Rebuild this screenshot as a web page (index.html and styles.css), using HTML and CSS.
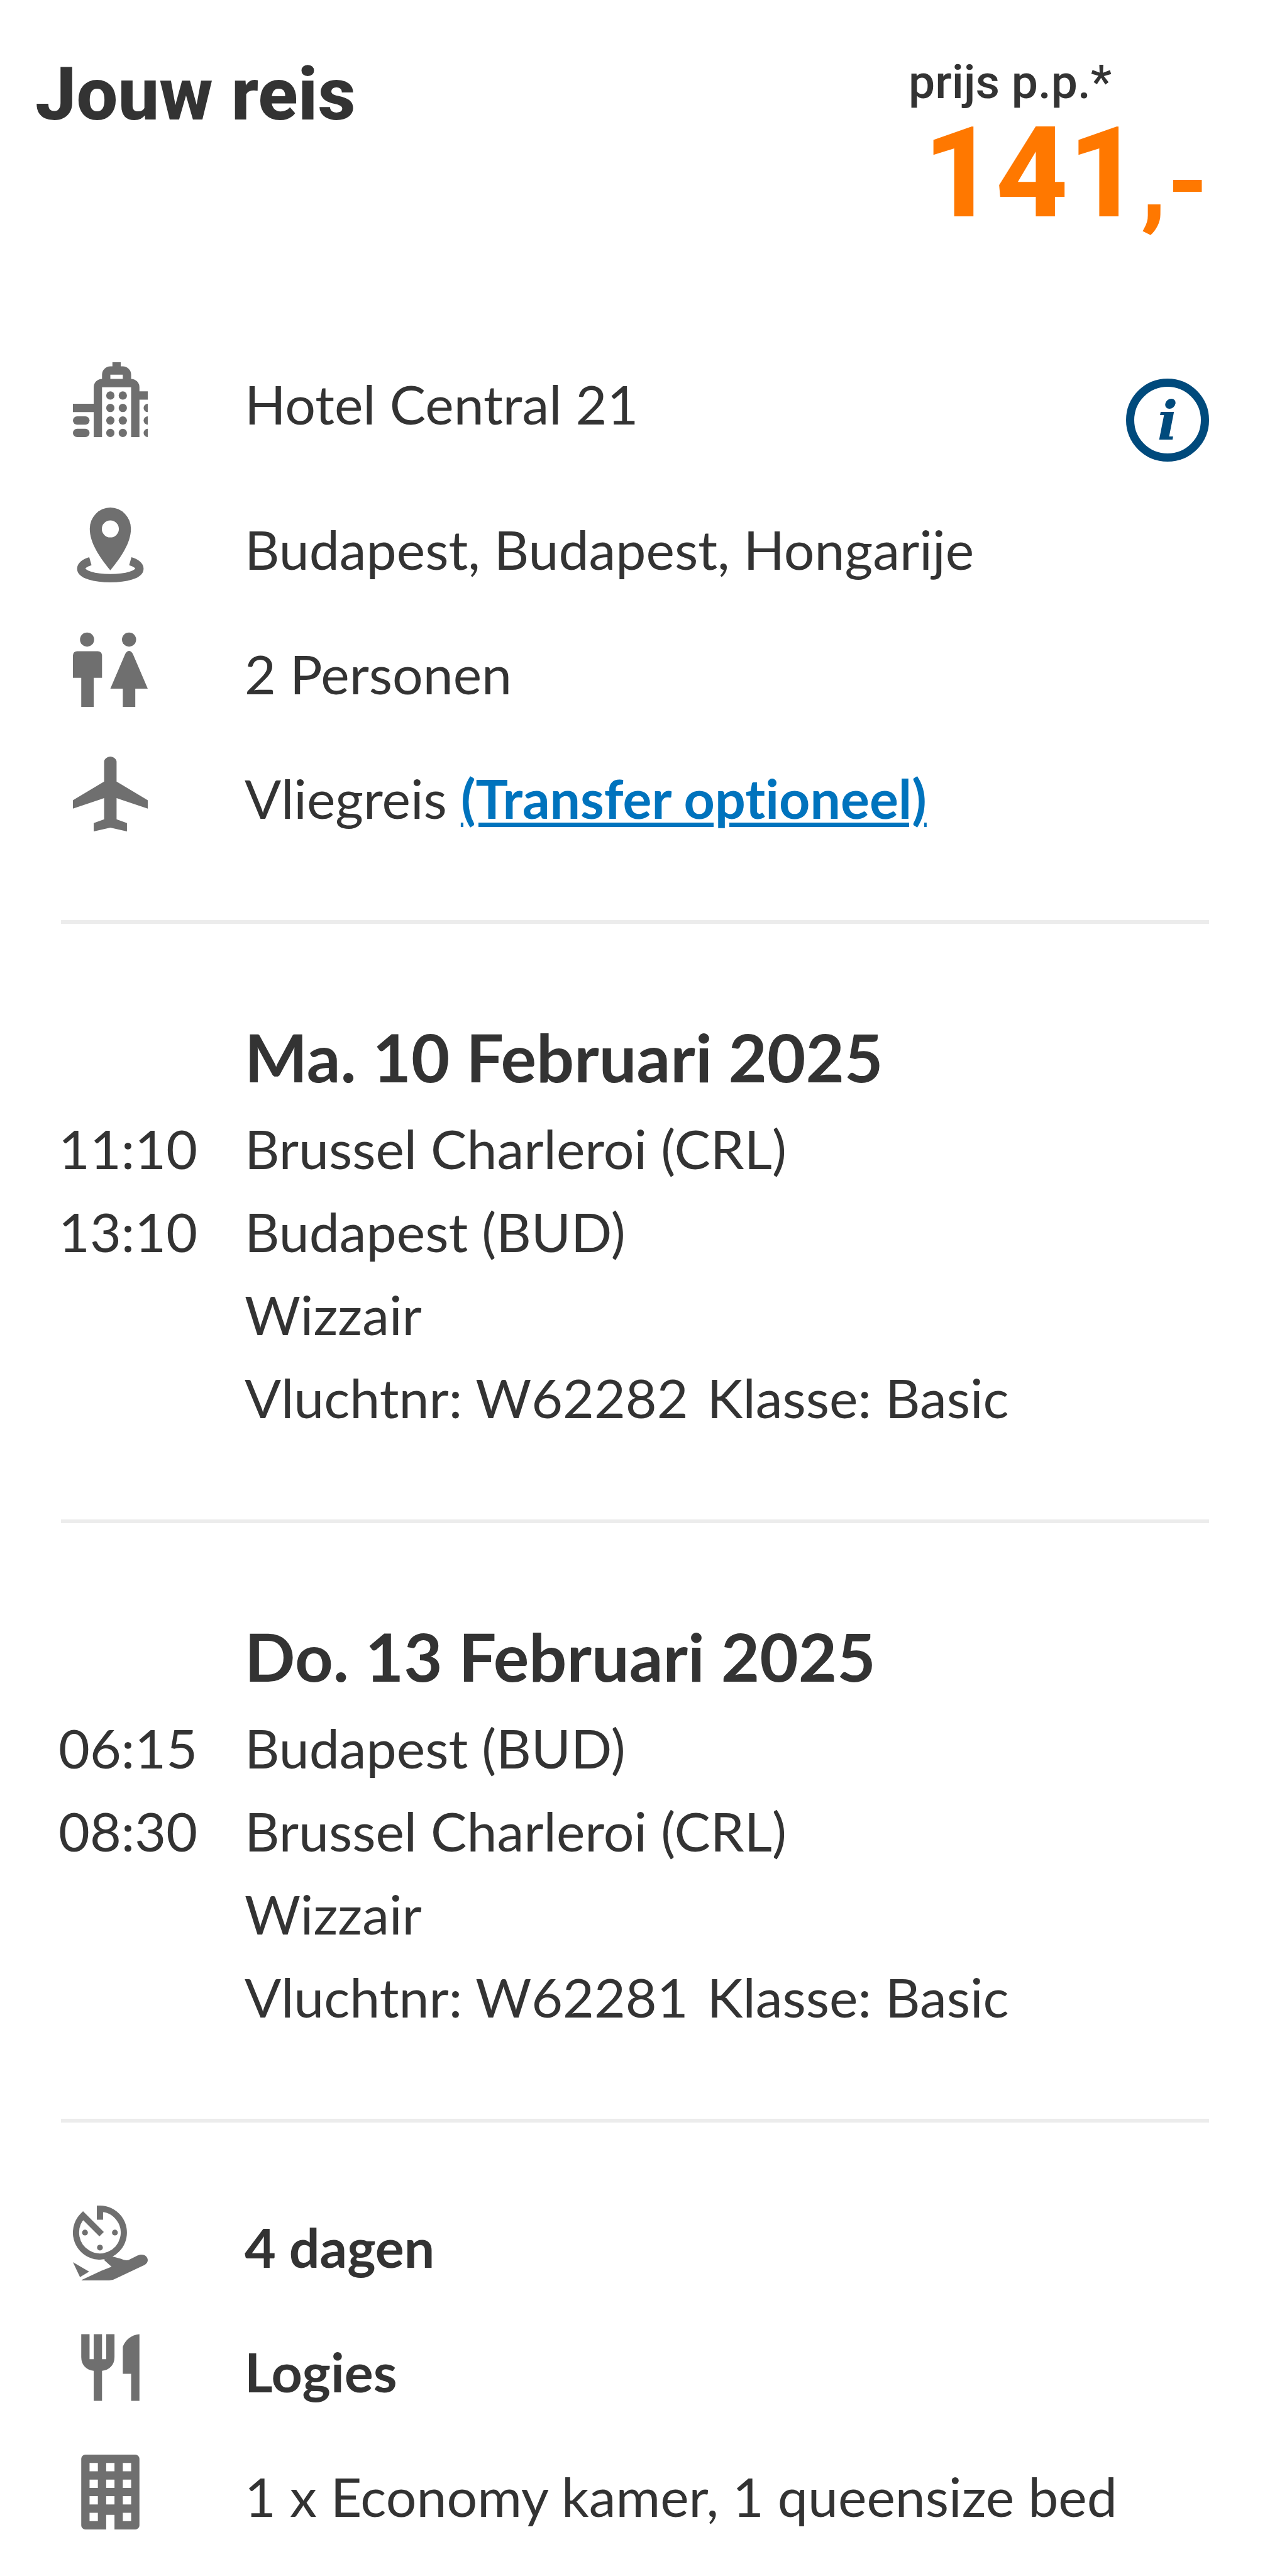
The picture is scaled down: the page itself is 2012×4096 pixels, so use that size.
FILE: index.html
```html
<!DOCTYPE html>
<html lang="nl">
<head>
    <meta charset="UTF-8">
    <meta name="viewport" content="width=device-width, initial-scale=1.0">
    <title>Jouw reis</title>
    <link rel="stylesheet" href="styles.css">
</head>
<body>

    <header class="header">
        <h1 class="title">Jouw reis</h1>
        <div class="price">
            <div class="price-label">prijs p.p.*</div>
            <div class="price-value">141<span class="price-cents">,-</span></div>
        </div>
    </header>

    <main class="trip">
        <section class="summary">
            <div class="row row-hotel">
                <svg class="icon" viewBox="0 0 18 18" aria-hidden="true">
                    <path fill-rule="evenodd" d="M5 18V12H0v-2h5V6a2 2 0 0 1 2-2V3a2 2 0 0 1 2-2h.5V0h2v1h.5a2 2 0 0 1 2 2v1a2 2 0 0 1 2 2v1h2v2h-2v9h-2V6H7v12zM9 3v1h3V3z"/>
                    <rect x="0" y="13" width="4" height="2" rx="1"/>
                    <rect x="0" y="16" width="4" height="2" rx="1"/>
                    <circle cx="9" cy="8" r="1"/><circle cx="12" cy="8" r="1"/>
                    <circle cx="9" cy="11" r="1"/><circle cx="12" cy="11" r="1"/><circle cx="18" cy="11" r="1"/>
                    <circle cx="9" cy="14" r="1"/><circle cx="12" cy="14" r="1"/><circle cx="18" cy="14" r="1"/>
                    <circle cx="9" cy="17" r="1"/><circle cx="12" cy="17" r="1"/><circle cx="18" cy="17" r="1"/>
                </svg>
                <span class="text">Hotel Central 21</span>
                <button class="info" type="button">i</button>
            </div>
            <div class="row">
                <svg class="icon" viewBox="0 0 18 18" aria-hidden="true">
                    <path fill-rule="evenodd" d="M9 0a4.95 5.1 0 0 1 4.95 5.1c0 3.4-2.4 6.9-4.95 10-2.55-3.1-4.95-6.6-4.95-10A4.95 5.1 0 0 1 9 0zM9 3.1a2.05 2.05 0 1 0 0 4.1 2.05 2.05 0 0 0 0-4.1z"/>
                    <path class="line" d="M4.2 12.9C2.8 13.3 2 14 2 14.7 2 16.1 5.2 17 9 17s7-.9 7-2.3c0-.7-.8-1.4-2.2-1.8"/>
                </svg>
                <span class="text">Budapest, Budapest, Hongarije</span>
            </div>
            <div class="row">
                <svg class="icon" viewBox="0 0 18 18" aria-hidden="true">
                    <circle cx="3.4" cy="1.8" r="1.7"/>
                    <circle cx="13.5" cy="1.8" r="1.7"/>
                    <path d="M1 4.6h5a1 1 0 0 1 1 1V11H5v7H2v-7H0V5.6a1 1 0 0 1 1-1z"/>
                    <path d="M12.6 5.2q.9-1.3 1.8 0L18 13.6h-3V18h-3v-4.4H9z"/>
                </svg>
                <span class="text">2 Personen</span>
            </div>
            <div class="row">
                <svg class="icon" viewBox="0 0 18 18" aria-hidden="true">
                    <path d="M9 0c.7 0 1.5.6 1.5 1.2V6l7.5 4.5v2L10.5 10v5.1L13 16v2l-4-.9L5 18v-2l2.5-.9V10L0 12.5v-2L7.5 6V1.2C7.5.6 8.3 0 9 0z"/>
                </svg>
                <span class="text">Vliegreis <a class="link" href="#">(Transfer optioneel)</a></span>
            </div>
        </section>

        <section class="flight">
            <h2 class="date">Ma. 10 Februari 2025</h2>
            <span class="time">11:10</span><span class="stop">Brussel Charleroi (CRL)</span>
            <span class="time">13:10</span><span class="stop">Budapest (BUD)</span>
            <span class="stop">Wizzair</span>
            <span class="stop"><span class="number">Vluchtnr: W62282</span>Klasse: Basic</span>
        </section>

        <section class="flight">
            <h2 class="date">Do. 13 Februari 2025</h2>
            <span class="time">06:15</span><span class="stop">Budapest (BUD)</span>
            <span class="time">08:30</span><span class="stop">Brussel Charleroi (CRL)</span>
            <span class="stop">Wizzair</span>
            <span class="stop"><span class="number">Vluchtnr: W62281</span>Klasse: Basic</span>
        </section>

        <section class="stay">
            <div class="row">
                <svg class="icon" viewBox="0 0 18 18" aria-hidden="true">
                    <path class="line thin" d="M6.5 3.4V.75A5.75 5.75 0 1 1 2.43 2.43L6.9 6.9"/>
                    <circle cx="2.9" cy="6.5" r=".7"/>
                    <circle cx="10.1" cy="6.5" r=".7"/>
                    <circle cx="6.5" cy="10.1" r=".7"/>
                    <path d="M0 13.6l3.9 2.3-2.2 1.3z"/>
                    <path d="M2.1 17.9L6.8 15.7l2.5-1L7.4 13l2-.8 2.1.6q1 .5 1.9.3l2.2-1.1c1.4-.6 2.4.2 2.4 1.1 0 .6-.4 1.1-1.2 1.4l-6.4 3q-.8.5-1.7.5H2.1z"/>
                </svg>
                <b class="text">4 dagen</b>
            </div>
            <div class="row">
                <svg class="icon" viewBox="0 0 18 18" aria-hidden="true">
                    <path d="M2 1h2v6h1V1h2v6h1V1h2v5.5c0 2-1.3 3.1-3 3.3V17H5V9.8c-1.7-.2-3-1.3-3-3.3z"/>
                    <path d="M16 1v16h-2v-6.5h-2V4c.7-1.7 2-2.8 4-3z"/>
                </svg>
                <b class="text">Logies</b>
            </div>
            <div class="row">
                <svg class="icon" viewBox="0 0 18 18" aria-hidden="true">
                    <path fill-rule="evenodd" d="M3 0h12a1 1 0 0 1 1 1v16a1 1 0 0 1-1 1h-5v-3.5H8V18H3a1 1 0 0 1-1-1V1a1 1 0 0 1 1-1zM4 2v2h2V2zM8 2v2h2V2zM12 2v2h2V2zM4 6v2h2V6zM8 6v2h2V6zM12 6v2h2V6zM4 10v2h2v-2zM8 10v2h2v-2zM12 10v2h2v-2zM4 14v2h2v-2zM12 14v2h2v-2z"/>
                </svg>
                <span class="text">1 x Economy kamer, 1 queensize bed</span>
            </div>
        </section>
    </main>

</body>
</html>
```
FILE: styles.css
```css
body {
    margin: 0;
    background-color: #fff;
    color: #333;
    font-family: Lato, sans-serif;
    font-size: 86px;
    font-variant-ligatures: none;
    line-height: 132px;
}
.header {
    display: flex;
    justify-content: space-between;
    align-items: flex-start;
    padding: 84px 89px 0 56px;
    font-family: Roboto, sans-serif;
}
.title {
    margin: 0;
    font-size: 117px;
    font-weight: 800;
}
.price {
    width: 478px;
}
.price-label {
    font-size: 75px;
    font-weight: 500;
    line-height: 92px;
}
.price-value {
    color: #ff7800;
    font-size: 200px;
    font-weight: 800;
    line-height: 200px;
    text-align: right;
}
.price-cents {
    font-size: 160px;
    line-height: 1;
}
.trip {
    padding: 200px 89px 0 97px;
}
.row {
    display: flex;
    align-items: flex-start;
    height: 132px;
    margin-bottom: 66px;
    padding-left: 19px;
}
.row-hotel {
    margin-bottom: 99px;
}
.icon {
    flex: none;
    width: 119px;
    height: 119px;
    margin-right: 154px;
    fill: #6f6f6f;
}
.line {
    fill: none;
    stroke: #6f6f6f;
    stroke-width: 2;
}
.thin {
    stroke-width: 1.5;
}
.text {
    flex: 1;
}
.info {
    box-sizing: border-box;
    width: 132px;
    height: 132px;
    margin-top: 26px;
    padding: 4px 0 0;
    border: 13px solid #004a7c;
    border-radius: 50%;
    background: none;
    color: #004a7c;
    font: italic bold 86px/100px "DejaVu Serif", serif;
    cursor: pointer;
}
.link {
    color: #0073bd;
    font-weight: bold;
    text-decoration-thickness: 7px;
    text-underline-offset: 6px;
}
.summary,
.flight {
    border-bottom: 6px solid #ececec;
}
.summary {
    padding-bottom: 62px;
}
.flight {
    display: grid;
    grid-template-columns: 292px 1fr;
    padding: 145px 0 128px;
}
.date {
    grid-column: 2;
    margin: 0 0 14px;
    font-size: 106px;
}
.time {
    margin-left: -4px;
}
.stop {
    grid-column: 2;
}
.number {
    margin-right: 30px;
}
.stay {
    padding-top: 132px;
}
.stay .row:last-child {
    margin-bottom: 0;
}
```
